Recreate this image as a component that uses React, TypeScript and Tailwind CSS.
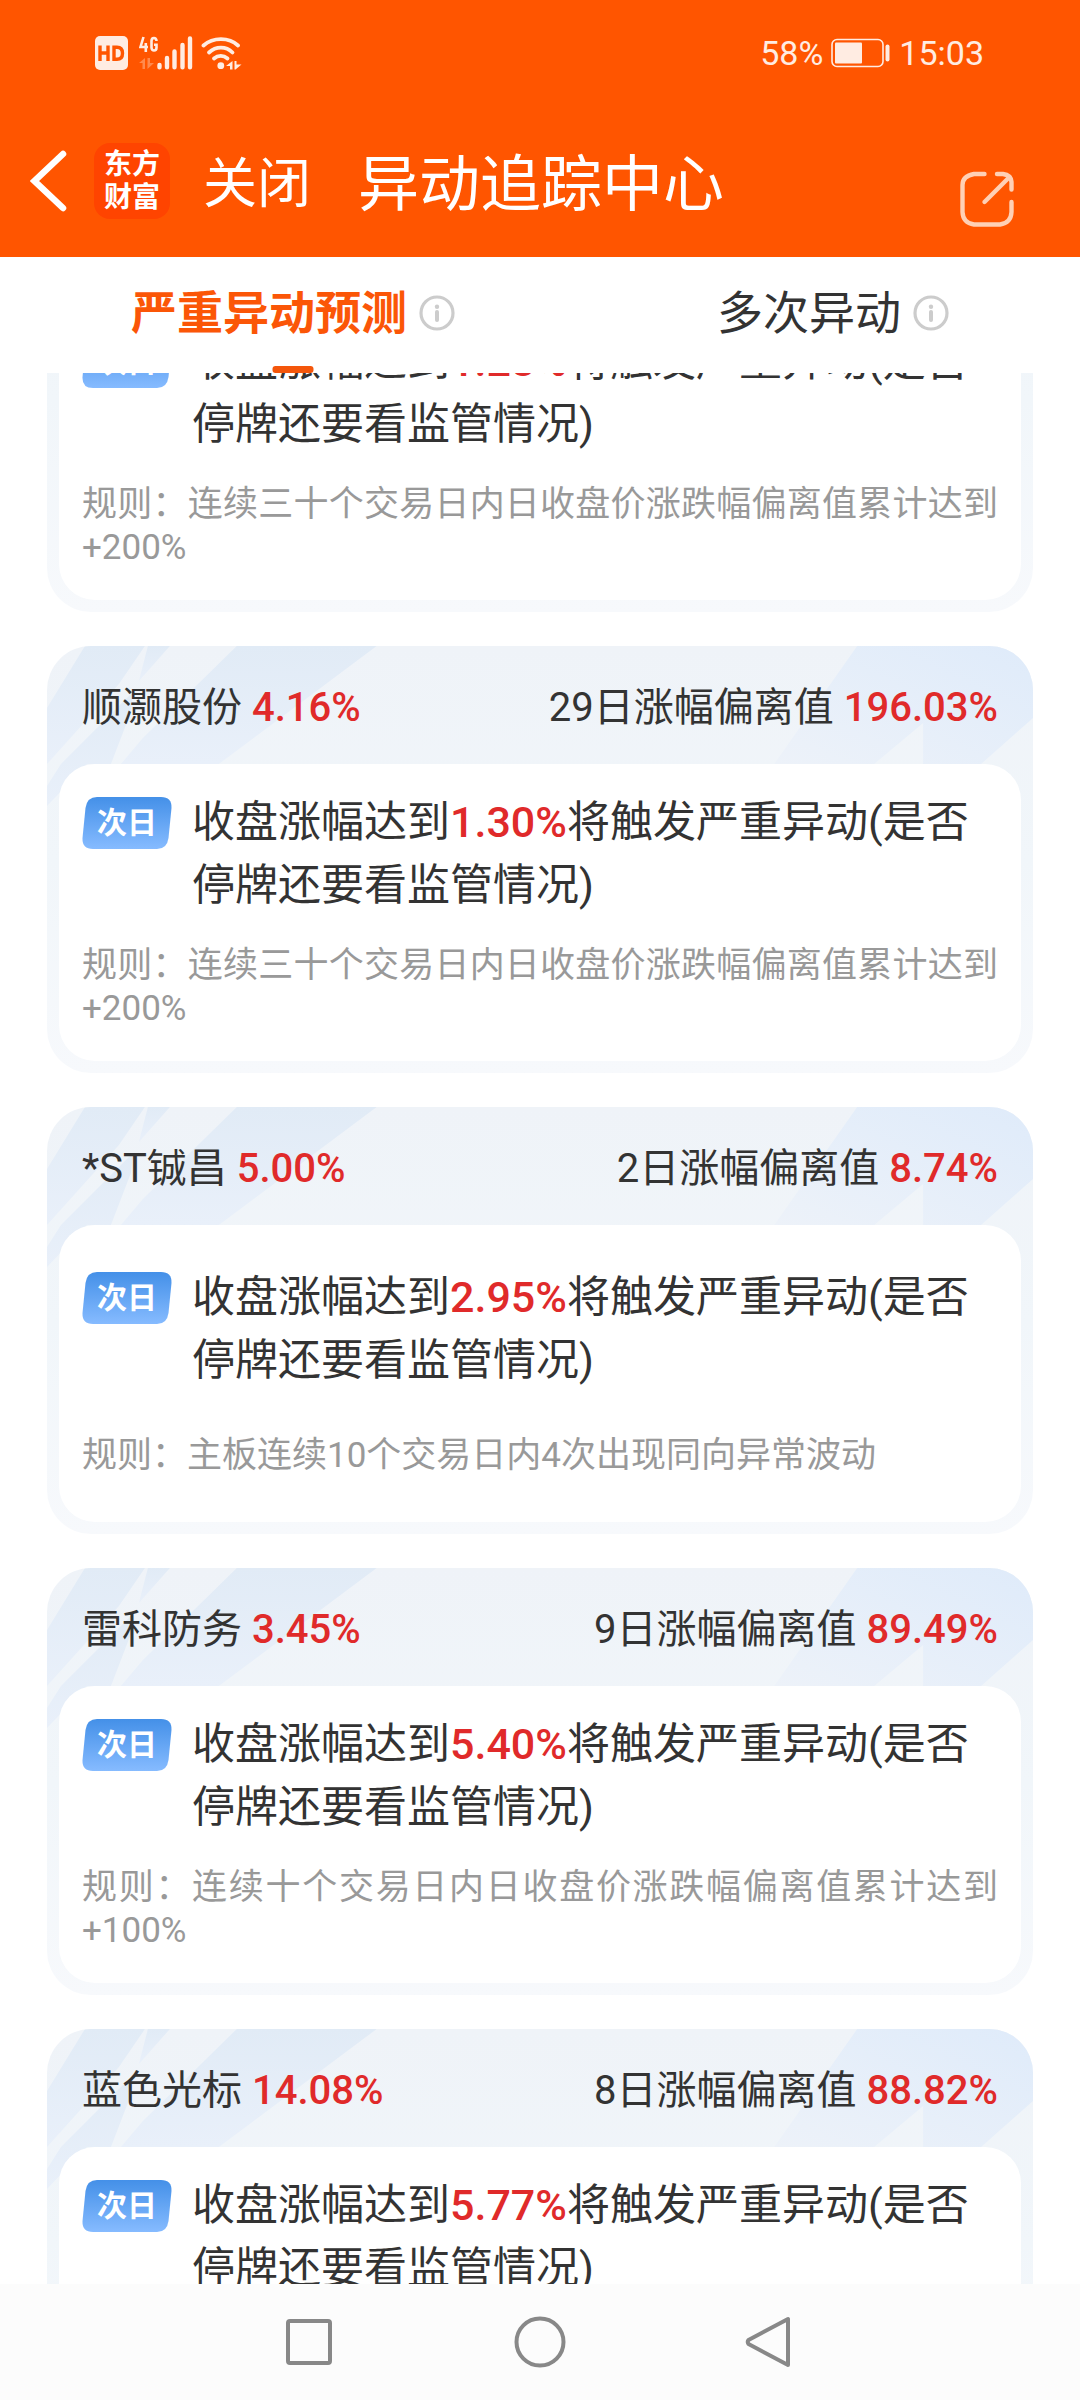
import { useLayoutEffect, useRef } from "react";

type Stock = {
  name?: string;
  change?: string;
  days?: string;
  deviation?: string;
  trigger: string;
  rule: string;
};

const RULE_30 = "规则：连续三十个交易日内日收盘价涨跌幅偏离值累计达到+200%";
const RULE_10 = "规则：连续十个交易日内日收盘价涨跌幅偏离值累计达到+100%";
const RULE_MAIN = "规则：主板连续10个交易日内4次出现同向异常波动";

const STOCKS: Stock[] = [
  { trigger: "1.28%", rule: RULE_30 },
  { name: "顺灏股份", change: "4.16%", days: "29日涨幅偏离值", deviation: "196.03%", trigger: "1.30%", rule: RULE_30 },
  { name: "*ST铖昌", change: "5.00%", days: "2日涨幅偏离值", deviation: "8.74%", trigger: "2.95%", rule: RULE_MAIN },
  { name: "雷科防务", change: "3.45%", days: "9日涨幅偏离值", deviation: "89.49%", trigger: "5.40%", rule: RULE_10 },
  { name: "蓝色光标", change: "14.08%", days: "8日涨幅偏离值", deviation: "88.82%", trigger: "5.77%", rule: RULE_10 },
];

function StatusBar() {
  return (
    <div className="flex h-[106px] items-center justify-between pl-[95px] pr-[96px] text-[#ffece2]">
      <div className="flex items-center">
        <svg width="33" height="34" viewBox="0 0 33 34" aria-label="HD">
          <rect width="33" height="34" rx="5" fill="currentColor" />
          <path d="M5 9.500V25M13 9.500V25M5 17H13" stroke="#ff5500" strokeWidth="3.400" fill="none" />
          <path d="M19 11.200V23.300H22C26 23.300 27.500 21 27.500 17.200C27.500 13.400 26 11.200 22 11.200Z" stroke="#ff5500" strokeWidth="3.400" fill="none" />
        </svg>
        <svg className="ml-[11px]" width="54" height="34" viewBox="0 0 54 34" fill="none" aria-label="4G">
          <g stroke="currentColor" strokeWidth="2.600">
            <path d="M4.500 1L1.500 11H9M6.800 7V16" />
            <path d="M17.500 5C17.500 1 12.500 1 12.500 5V11.500C12.500 15.500 17.500 15.500 17.500 11.500V8.800H15" />
          </g>
          <path d="M0 27L6 22V33H3.500V27ZM8.500 22H11V27H15L8.500 33Z" fill="#ff8a4d" />
          <g stroke="currentColor" strokeWidth="4.400" strokeLinecap="round">
            <path d="M20.500 29V31.300M28 22V31.300M35.500 15.500V31.300M43.500 9V31.300M51 2.500V31.300" />
          </g>
        </svg>
        <svg className="ml-2" width="41" height="34" viewBox="0 0 41 34" fill="none" aria-label="Wi-Fi">
          <g stroke="currentColor" strokeWidth="3.800" strokeLinecap="round">
            <path d="M2.500 9.500C12 1 28 1 37 9.500" />
            <path d="M8 16.500C15 10 25 10 31.500 16.500" />
            <path d="M13 22.500C17 19 22.500 19 26.500 22.500" />
          </g>
          <circle cx="19.800" cy="29.700" r="3.400" fill="currentColor" />
          <path d="M25 30L31.500 25V33.500H29V30ZM33.500 25H35.500V28.500H40.500L34.500 33.500H33.500Z" fill="currentColor" />
        </svg>
      </div>
      <div className="flex items-center text-[34px] leading-10">
        <span>58%</span>
        <svg className="ml-2 mr-[9px]" width="59" height="30" viewBox="0 0 59 30" fill="none">
          <rect x="1" y="1.500" width="51" height="27" rx="5" stroke="currentColor" strokeWidth="1.600" />
          <rect x="4" y="4.500" width="27" height="21" rx="1" fill="currentColor" />
          <rect x="54.500" y="6.500" width="4" height="17" rx="2" fill="currentColor" />
        </svg>
        <span>15:03</span>
      </div>
    </div>
  );
}

function NavBar() {
  return (
    <div className="flex h-[151px] items-center pb-px pl-[30px] pr-[66px] text-white">
      <button type="button" aria-label="返回">
        <svg width="37" height="62" viewBox="0 0 37 62" fill="none">
          <path d="M33 4L4.500 31L33 58" stroke="currentColor" strokeWidth="6.500" strokeLinecap="round" strokeLinejoin="miter" />
        </svg>
      </button>
      <a
        href="#home"
        className="ml-[27px] flex size-[76px] flex-col items-center justify-center rounded-[16px] bg-[#ff4400] text-[28px] leading-[33px] font-bold"
      >
        <span>东方</span>
        <span>财富</span>
      </a>
      <button type="button" className="ml-[33px] pt-2 text-[54px] leading-[64px]">关闭</button>
      <h1 className="ml-[47px] pt-2 text-[61px] leading-[72px] font-normal">异动追踪中心</h1>
      <button type="button" aria-label="分享" className="ml-auto pt-9 text-[#ffd0b5]">
        <svg width="54" height="56" viewBox="0 0 54 56" fill="none" stroke="currentColor" strokeWidth="4.400" strokeLinecap="round">
          <path d="M24.500 3H14Q2.500 5 2.500 14V41Q3 52 14 53.500H40Q51 52 51.500 41V31" />
          <path d="M37 3H43Q51 4 51.500 11V18.500" />
          <path d="M24.500 31L49.500 6" />
        </svg>
      </button>
    </div>
  );
}

function InfoIcon() {
  return (
    <svg width="36" height="36" viewBox="0 0 36 36" fill="none" stroke="#cccccc">
      <circle cx="18" cy="18" r="16" strokeWidth="3.200" />
      <path d="M18 17V25" strokeWidth="4" strokeLinecap="round" />
      <circle cx="18" cy="11.800" r="2.200" fill="#cccccc" stroke="none" />
    </svg>
  );
}

function Tabs() {
  return (
    <nav className="flex h-[116px] shrink-0 items-stretch justify-around bg-white text-[46px] leading-[56px] text-[#333333]">
      <button type="button" aria-current="page" className="relative flex items-center gap-3 pb-1 font-bold text-[#fb5607]">
        严重异动预测
        <InfoIcon />
        <span className="absolute bottom-0 left-1/2 h-[7px] w-[41px] -translate-x-1/2 rounded-[3px] bg-[#f4560b]" />
      </button>
      <button type="button" className="flex items-center gap-3 pb-1">
        多次异动
        <InfoIcon />
      </button>
    </nav>
  );
}

function Shards() {
  return (
    <svg className="absolute inset-x-0 top-0 h-[160px] w-full" viewBox="0 0 987 160" preserveAspectRatio="none" aria-hidden="true">
      <defs>
        <linearGradient id="shard-left" x1="0" y1="0" x2="0" y2="1">
          <stop offset="0" stopColor="#e1ebf6" />
          <stop offset="1" stopColor="#e9f0fa" />
        </linearGradient>
        <linearGradient id="shard-right" x1="0" y1="1" x2="1" y2="0">
          <stop offset="0" stopColor="#edf2f9" />
          <stop offset="1" stopColor="#dfebfa" />
        </linearGradient>
      </defs>
      <g fill="url(#shard-left)">
        <path d="M38 0H98L72 38L0 118V62Z" />
        <path d="M101 0H123L92 35Z" />
        <path d="M86 46L14 118L0 140V160L40 118H64L84 66Z" />
        <path d="M190 0H330L172 118H74L96 92Z" />
      </g>
      <path d="M811 0H987V72L935 118H877V77L828 118H728Z" fill="url(#shard-right)" />
    </svg>
  );
}

function NextDayChip() {
  return (
    <span className="relative mt-[6px] flex h-[52px] w-[90px] shrink-0 items-center justify-center text-[30px] leading-[36px] font-bold text-white">
      <svg className="absolute inset-0" width="90" height="52" viewBox="0 0 90 52" aria-hidden="true">
        <defs>
          <linearGradient id="chip" x1="0" y1="0" x2="0" y2="1">
            <stop offset="0" stopColor="#4490e8" />
            <stop offset="1" stopColor="#86bbff" />
          </linearGradient>
        </defs>
        <path d="M15 0H79Q90 0 89.500 11L86.500 41Q85 52 75 52H11Q0 52 .500 41L3.500 11Q5 0 15 0Z" fill="url(#chip)" />
      </svg>
      <span className="relative">次日</span>
    </span>
  );
}

function StockCard({ stock }: { stock: Stock }) {
  return (
    <article className="relative overflow-hidden rounded-[44px] bg-linear-to-b from-[#eff3f8] via-[#f1f6fa] to-[#f7f9fc] px-3 pb-3">
      <Shards />
      <header className="relative flex h-[118px] items-center justify-between px-[23px] pt-[6px] text-[40px] leading-[48px] text-[#333333]">
        {stock.name && (
          <>
            <h2 className="font-normal">
              {stock.name} <span className="font-medium text-[#e02a2a]">{stock.change}</span>
            </h2>
            <p>
              {stock.days} <span className="font-medium text-[#e02a2a]">{stock.deviation}</span>
            </p>
          </>
        )}
      </header>
      <div className="relative flex min-h-[297px] flex-col justify-evenly rounded-[36px] bg-white px-[23px] pb-1">
        <div className="flex items-start gap-5">
          <NextDayChip />
          <p className="text-[43px] leading-[63px] text-[#333333]">
            收盘涨幅达到<span className="font-medium text-[#e02a2a]">{stock.trigger}</span>将触发严重异动(是否停牌还要看监管情况)
          </p>
        </div>
        <p className="text-justify text-[35px] leading-[43px] text-[#999999]">{stock.rule}</p>
      </div>
    </article>
  );
}

function SystemNav() {
  return (
    <footer className="flex h-[116px] shrink-0 items-center justify-center gap-[178px] bg-[#fcfcfc] text-[#888888]">
      <button type="button" aria-label="最近任务">
        <svg width="52" height="52" viewBox="0 0 52 52" fill="none" stroke="currentColor" strokeWidth="4">
          <rect x="4" y="5" width="42" height="42" rx="2" />
        </svg>
      </button>
      <button type="button" aria-label="主页">
        <svg width="52" height="52" viewBox="0 0 52 52" fill="none" stroke="currentColor" strokeWidth="4">
          <circle cx="26" cy="26" r="23.500" />
        </svg>
      </button>
      <button type="button" aria-label="后退">
        <svg width="52" height="52" viewBox="0 0 52 52" fill="none" stroke="currentColor" strokeWidth="4" strokeLinejoin="round">
          <path d="M44 3V49L4.500 28Q3 26 4.500 24Z" />
        </svg>
      </button>
    </footer>
  );
}

export default function App() {
  const listRef = useRef<HTMLElement>(null);

  // Opens part-way through the first card.
  useLayoutEffect(() => {
    if (listRef.current) listRef.current.scrollTop = 188;
  }, []);

  return (
    <div className="flex h-screen flex-col bg-white font-['Roboto','Noto_Sans_CJK_SC',sans-serif]">
      <div className="shrink-0 bg-[#ff5500]">
        <StatusBar />
        <NavBar />
      </div>
      <Tabs />
      <main ref={listRef} className="flex min-h-0 flex-1 flex-col gap-[34px] overflow-y-auto px-[47px] [scrollbar-width:none]">
        {STOCKS.map((stock) => (
          <div key={stock.trigger} className="shrink-0">
            <StockCard stock={stock} />
          </div>
        ))}
      </main>
      <SystemNav />
    </div>
  );
}
